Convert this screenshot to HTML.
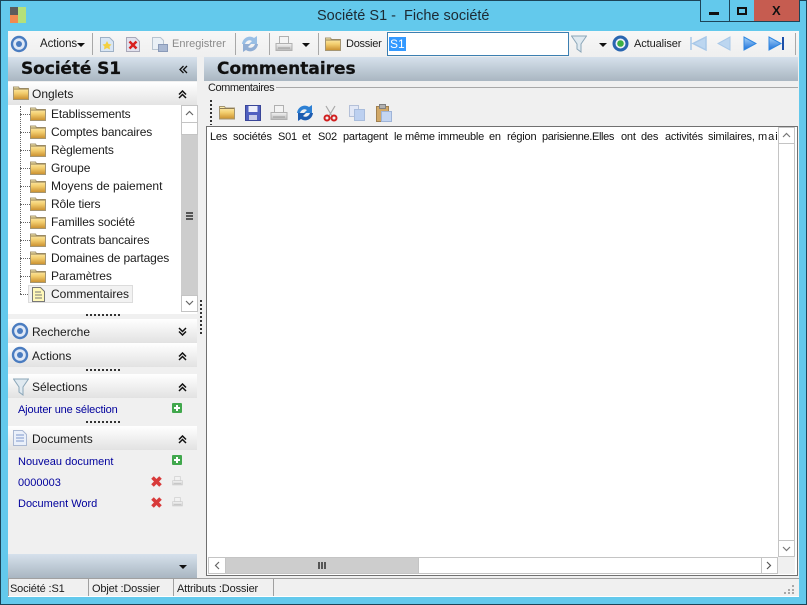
<!DOCTYPE html>
<html><head><meta charset="utf-8">
<style>
html,body{margin:0;padding:0}
body{width:807px;height:605px;overflow:hidden;position:relative;background:#63c9ec;font-family:"Liberation Sans",sans-serif;font-size:12px;color:#1c1c1c}
div,span,svg{position:absolute;box-sizing:border-box}
.t{white-space:nowrap;line-height:14px}
.tr{letter-spacing:-.13px}
.hd{background:linear-gradient(#d6e1ec,#a9b6c1)}
.sec{left:8px;width:189px;height:24px;background:linear-gradient(#ffffff,#e2e2e2)}
.lnk{color:#00009c;white-space:nowrap;line-height:14px;left:18px;font-size:11px}
.dots{left:86px;width:35px;height:2px;background:repeating-linear-gradient(90deg,#333 0 2px,transparent 2px 4px)}
.sep{width:1px;background:#a8a8a8;top:33px;height:22px}
.lbl{font-size:11px}
.h{font-family:'DejaVu Sans',sans-serif;font-weight:bold;font-size:17px;line-height:22px;color:#101010;-webkit-text-stroke:.25px #101010}
.w span{top:0;white-space:nowrap}
.st{font-size:11px;letter-spacing:-.15px}
</style></head><body>
<svg width="0" height="0" style="left:0;top:0">
<defs>
<linearGradient id="fg" x1="0" y1="0" x2="0" y2="1"><stop offset="0" stop-color="#fff3b8"/><stop offset=".5" stop-color="#f2cc6c"/><stop offset="1" stop-color="#c98f2e"/></linearGradient>
<linearGradient id="pg" x1="0" y1="0" x2="0" y2="1"><stop offset="0" stop-color="#f4f4f4"/><stop offset="1" stop-color="#b8b8b8"/></linearGradient>
<linearGradient id="bg" x1="0" y1="0" x2="0" y2="1"><stop offset="0" stop-color="#a8d4fa"/><stop offset="1" stop-color="#1c6fd8"/></linearGradient>
<symbol id="folder" viewBox="0 0 16 14"><path d="M.5 2.500V1h5l1 1.500h9v11H.5z" fill="url(#fg)" stroke="#a49572"/><path d="M1 3h14" stroke="#8e7c54" stroke-width="1"/></symbol>
<symbol id="target" viewBox="0 0 18 18"><circle cx="9" cy="9" r="7" fill="#dfe8f6" stroke="#4a7cc0" stroke-width="2.400"/><circle cx="9" cy="9" r="3" fill="#4a7cc0"/></symbol>
<symbol id="printer" viewBox="0 0 18 16"><rect x="4.500" y=".5" width="9" height="7" fill="#f4f4f4" stroke="#b0b0b0"/><path d="M1 7.500h16v7H1z" fill="url(#pg)" stroke="#b0b0b0"/><path d="M3 12h12" stroke="#999"/></symbol>
<symbol id="funnel" viewBox="0 0 16 18"><path d="M.5 1h15L10 9v8L6 14V9z" fill="#dfe9f0" stroke="#8ba6b8"/></symbol>
<symbol id="refresh" viewBox="0 0 18 18"><path d="M1 9C2 2 9 0 13 3l3-2v8H8l3-3C8 4 5 6 4 9z" fill="#2d80d4"/><path d="M17 9c-1 7-8 9-12 6l-3 2V9h8l-3 3c3 2 6 0 7-3z" fill="#1d5cb0"/></symbol>
<symbol id="dchev" viewBox="0 0 9 9"><path d="M1 4.500 4.500 1 8 4.500M1 8 4.500 4.500 8 8" fill="none" stroke="#111" stroke-width="1.500"/></symbol>
<symbol id="plus" viewBox="0 0 11 11"><rect width="10" height="10" fill="#41a84d" rx="1"/><path d="M5 2v6M2 5h6" stroke="#fff" stroke-width="2"/></symbol>
<symbol id="redx" viewBox="0 0 11 11"><path d="M1.500 1.500l8 8M9.500 1.500l-8 8" stroke="#d83a3a" stroke-width="3.600"/></symbol>
<symbol id="note" viewBox="0 0 13 15"><path d="M.5.5h8l4 4v10H.5z" fill="#fff8b8" stroke="#777"/><path d="M3 5h6M3 8h7M3 11h7" stroke="#777"/></symbol>
<symbol id="docb" viewBox="0 0 14 16"><path d="M.5.5h9l4 4v11H.5z" fill="#eaf0fa" stroke="#aab8d2"/><path d="M3 5h8M3 8h8M3 11h8" stroke="#7f98cc"/></symbol>
</defs></svg>

<!-- window frame -->
<div style="left:0;top:0;width:807px;height:605px;border:1px solid #1c4458"></div>
<div class="t" style="left:317px;top:8px;font-size:14.500px;color:#1d2a33;line-height:16px;white-space:pre">Société S1 -  Fiche société</div>
<!-- app icon -->
<div style="left:10px;top:7px;width:8px;height:8px;background:#5c5c5c"></div>
<div style="left:10px;top:15px;width:8px;height:8px;background:#f08a50"></div>
<div style="left:18px;top:7px;width:8px;height:16px;background:#b4e07a"></div>
<!-- caption buttons -->
<div style="left:700px;top:0;width:100px;height:22px;border:1px solid #1c4458;border-top:0;background:#63c9ec"></div>
<div style="left:729px;top:0;width:1px;height:21px;background:#1c4458"></div>
<div style="left:754px;top:0;width:46px;height:22px;background:#c65c50;border-bottom:1px solid #1c4458;border-right:1px solid #1c4458"></div>
<div style="left:709px;top:12px;width:10px;height:3px;background:#111"></div>
<div style="left:737px;top:7px;width:10px;height:8px;border:2px solid #111"></div>
<div class="t" style="left:772px;top:3px;font-size:13px;font-weight:bold;line-height:16px;color:#111">X</div>

<!-- client -->
<div style="left:8px;top:31px;width:791px;height:566px;background:#f0f0f0"></div>

<!-- toolbar -->
<div style="left:8px;top:31px;width:791px;height:26px;background:linear-gradient(#f7f7f7,#efefef)"></div>
<svg style="left:10px;top:35px" width="18" height="18"><use href="#target"/></svg>
<div class="t lbl" style="left:40px;top:37px;font-size:11.500px;letter-spacing:-.1px">Actions</div>
<div style="left:77px;top:43px;border:4px solid transparent;border-top:4px solid #111;border-bottom:0"></div>
<div class="sep" style="left:92px"></div>
<svg style="left:100px;top:37px" width="14" height="15"><path d="M.5.5h9l4 4v10H.5z" fill="#d9e6f4" stroke="#9fb1c6"/><path d="M7 4l1.500 3 3 .5-2 2 .5 3L7 11l-3 1.500.5-3-2-2 3-.5z" fill="#f4d040"/></svg>
<svg style="left:126px;top:37px" width="14" height="15"><path d="M.5.5h9l4 4v10H.5z" fill="#e2e2ee" stroke="#a8a8b8"/><path d="M3.500 4.500l7 7M10.500 4.500l-7 7" stroke="#d82020" stroke-width="2.500"/></svg>
<svg style="left:152px;top:37px" width="16" height="15"><path d="M.5.5h8l3 3v9H.5z" fill="#eaf0f6" stroke="#b8c4d0"/><rect x="6.500" y="7.500" width="9" height="7" fill="#a9b8d2" stroke="#8a9ab8"/></svg>
<div class="t lbl" style="left:172px;top:37px;color:#8a8a8a">Enregistrer</div>
<div class="sep" style="left:235px"></div>
<svg style="left:241px;top:35px;opacity:.45" width="18" height="18"><use href="#refresh"/></svg>
<div class="sep" style="left:269px"></div>
<svg style="left:275px;top:36px" width="18" height="16"><use href="#printer"/></svg>
<div style="left:302px;top:43px;border:4px solid transparent;border-top:4px solid #111;border-bottom:0"></div>
<div class="sep" style="left:318px"></div>
<svg style="left:325px;top:37px" width="16" height="14"><use href="#folder"/></svg>
<div class="t lbl" style="left:346px;top:37px;letter-spacing:-.25px">Dossier</div>
<div style="left:387px;top:32px;width:182px;height:24px;background:#fff;border:1px solid #3c7fb1"></div>
<div class="t" style="left:389px;top:37px;background:#3399ff;color:#fff;padding:0 1px;font-size:12px">S1</div>
<svg style="left:571px;top:35px" width="16" height="18"><use href="#funnel"/></svg>
<div style="left:599px;top:43px;border:4px solid transparent;border-top:4px solid #111;border-bottom:0"></div>
<svg style="left:612px;top:35px" width="17" height="17"><circle cx="8.500" cy="8.500" r="6.500" fill="#eef2f8" stroke="#2a66b0" stroke-width="3"/><circle cx="8.500" cy="8.500" r="3.300" fill="#3cb043"/></svg>
<div class="t lbl" style="left:634px;top:37px;letter-spacing:-.1px">Actualiser</div>
<svg style="left:690px;top:36px" width="18" height="15"><path d="M1 1v13M16 1v13L3 7.500z" fill="#bcd6f0" stroke="#a8c8e8" stroke-width="1.500"/></svg>
<svg style="left:717px;top:36px" width="14" height="15"><path d="M13 1v13L1 7.500z" fill="#bcd6f0" stroke="#a8c8e8"/></svg>
<svg style="left:743px;top:36px" width="14" height="15"><path d="M1 1v13L13 7.500z" fill="url(#bg)" stroke="#2f86e0"/></svg>
<svg style="left:768px;top:36px" width="18" height="15"><path d="M1 1v13L13 7.500z" fill="url(#bg)" stroke="#2f86e0"/><path d="M15 1v13" stroke="#1c4fa8" stroke-width="2"/></svg>
<div class="sep" style="left:795px"></div>

<!-- left header -->
<div class="hd" style="left:8px;top:57px;width:189px;height:24px"></div>
<div class="t h" style="left:21px;top:58px;letter-spacing:-.1px">Société S1</div>
<svg style="left:179px;top:65px" width="9" height="9"><path d="M4.500 1 1 4.500 4.500 8M8 1 4.500 4.500 8 8" fill="none" stroke="#111" stroke-width="1.300"/></svg>
<!-- right header -->
<div class="hd" style="left:204px;top:57px;width:594px;height:24px"></div>
<div class="t h" style="left:217px;top:58px">Commentaires</div>

<!-- Onglets -->
<div class="sec" style="top:82px"></div>
<svg style="left:13px;top:86px" width="16" height="14"><use href="#folder"/></svg>
<div class="t" style="left:32px;top:87px">Onglets</div>
<svg style="left:178px;top:90px" width="9" height="9"><use href="#dchev"/></svg>

<!-- tree -->
<div style="left:8px;top:105px;width:189px;height:209px;background:#fff"></div>
<div style="left:20px;top:106px;width:0;height:188px;border-left:1px dotted #666"></div>
<div style="left:20px;top:114px;width:10px;height:0;border-top:1px dotted #666"></div>
<div style="left:20px;top:132px;width:10px;height:0;border-top:1px dotted #666"></div>
<div style="left:20px;top:150px;width:10px;height:0;border-top:1px dotted #666"></div>
<div style="left:20px;top:168px;width:10px;height:0;border-top:1px dotted #666"></div>
<div style="left:20px;top:186px;width:10px;height:0;border-top:1px dotted #666"></div>
<div style="left:20px;top:204px;width:10px;height:0;border-top:1px dotted #666"></div>
<div style="left:20px;top:222px;width:10px;height:0;border-top:1px dotted #666"></div>
<div style="left:20px;top:240px;width:10px;height:0;border-top:1px dotted #666"></div>
<div style="left:20px;top:258px;width:10px;height:0;border-top:1px dotted #666"></div>
<div style="left:20px;top:276px;width:10px;height:0;border-top:1px dotted #666"></div>
<div style="left:20px;top:294px;width:10px;height:0;border-top:1px dotted #666"></div>
<svg style="left:30px;top:107px" width="16" height="14"><use href="#folder"/></svg><div class="t tr" style="left:51px;top:107px">Etablissements</div>
<svg style="left:30px;top:125px" width="16" height="14"><use href="#folder"/></svg><div class="t tr" style="left:51px;top:125px">Comptes bancaires</div>
<svg style="left:30px;top:143px" width="16" height="14"><use href="#folder"/></svg><div class="t tr" style="left:51px;top:143px">Règlements</div>
<svg style="left:30px;top:161px" width="16" height="14"><use href="#folder"/></svg><div class="t tr" style="left:51px;top:161px">Groupe</div>
<svg style="left:30px;top:179px" width="16" height="14"><use href="#folder"/></svg><div class="t" style="left:51px;top:179px">Moyens de paiement</div>
<svg style="left:30px;top:197px" width="16" height="14"><use href="#folder"/></svg><div class="t tr" style="left:51px;top:197px">Rôle tiers</div>
<svg style="left:30px;top:215px" width="16" height="14"><use href="#folder"/></svg><div class="t tr" style="left:51px;top:215px">Familles société</div>
<svg style="left:30px;top:233px" width="16" height="14"><use href="#folder"/></svg><div class="t tr" style="left:51px;top:233px">Contrats bancaires</div>
<svg style="left:30px;top:251px" width="16" height="14"><use href="#folder"/></svg><div class="t tr" style="left:51px;top:251px">Domaines de partages</div>
<svg style="left:30px;top:269px" width="16" height="14"><use href="#folder"/></svg><div class="t tr" style="left:51px;top:269px">Paramètres</div>
<div style="left:28px;top:285px;width:105px;height:18px;background:#f2f2f2;border:1px solid #dcdcdc"></div>
<svg style="left:32px;top:287px" width="13" height="15"><use href="#note"/></svg><div class="t" style="left:51px;top:287px">Commentaires</div>
<!-- tree scrollbar -->
<div style="left:181px;top:105px;width:17px;height:207px;background:#cdcdcd"></div>
<div style="left:181px;top:105px;width:17px;height:18px;background:#fff;border:1px solid #c4c4c4"></div>
<div style="left:181px;top:123px;width:17px;height:12px;background:#fff;border:1px solid #c4c4c4;border-top:0"></div>
<div style="left:181px;top:295px;width:17px;height:17px;background:#fff;border:1px solid #c4c4c4"></div>
<svg style="left:185px;top:110px" width="9" height="6"><path d="M1 5 4.500 1.500 8 5" fill="none" stroke="#666" stroke-width="1.200"/></svg>
<svg style="left:185px;top:300px" width="9" height="6"><path d="M1 1 4.500 4.500 8 1" fill="none" stroke="#666" stroke-width="1.200"/></svg>
<div style="left:186px;top:212px;width:7px;height:8px;background:repeating-linear-gradient(#555 0 2px,transparent 2px 3px)"></div>
<div class="dots" style="top:314px"></div>
<div style="left:200px;top:300px;width:2px;height:36px;background:repeating-linear-gradient(#333 0 2px,transparent 2px 4px)"></div>

<!-- sections -->
<div class="sec" style="top:319px"></div>
<svg style="left:11px;top:322px" width="18" height="18"><use href="#target"/></svg>
<div class="t" style="left:32px;top:325px">Recherche</div>
<svg style="left:178px;top:327px" width="9" height="9"><path d="M1 1l3.500 3.500L8 1M1 4.500 4.500 8 8 4.500" fill="none" stroke="#111" stroke-width="1.500"/></svg>
<div class="sec" style="top:343px"></div>
<svg style="left:11px;top:346px" width="18" height="18"><use href="#target"/></svg>
<div class="t" style="left:32px;top:349px">Actions</div>
<svg style="left:178px;top:352px" width="9" height="9"><use href="#dchev"/></svg>
<div class="dots" style="top:369px"></div>
<div class="sec" style="top:374px"></div>
<svg style="left:13px;top:378px" width="16" height="18"><use href="#funnel"/></svg>
<div class="t" style="left:32px;top:380px">Sélections</div>
<svg style="left:178px;top:383px" width="9" height="9"><use href="#dchev"/></svg>
<div class="lnk" style="top:403px;letter-spacing:-.15px">Ajouter une sélection</div>
<svg style="left:172px;top:403px" width="11" height="11"><use href="#plus"/></svg>
<div class="dots" style="top:421px"></div>
<div class="sec" style="top:426px"></div>
<svg style="left:13px;top:430px" width="14" height="16"><use href="#docb"/></svg>
<div class="t" style="left:32px;top:432px">Documents</div>
<svg style="left:178px;top:435px" width="9" height="9"><use href="#dchev"/></svg>
<div class="lnk" style="top:455px">Nouveau document</div>
<svg style="left:172px;top:455px" width="11" height="11"><use href="#plus"/></svg>
<div class="lnk" style="top:476px">0000003</div>
<svg style="left:151px;top:476px" width="11" height="11"><use href="#redx"/></svg>
<svg style="left:172px;top:476px;opacity:.6" width="11" height="10"><use href="#printer"/></svg>
<div class="lnk" style="top:497px">Document Word</div>
<svg style="left:151px;top:497px" width="11" height="11"><use href="#redx"/></svg>
<svg style="left:172px;top:497px;opacity:.6" width="11" height="10"><use href="#printer"/></svg>
<div class="hd" style="left:8px;top:554px;width:189px;height:24px"></div>
<div style="left:179px;top:565px;border:4px solid transparent;border-top:4px solid #111;border-bottom:0"></div>

<!-- right content -->
<div class="t" style="left:208px;top:81px;font-size:11px;letter-spacing:-.45px">Commentaires</div>
<div style="left:276px;top:87px;width:522px;height:1px;background:#a8a8a8"></div>
<div style="left:210px;top:100px;height:25px;background:repeating-linear-gradient(#333 0 2px,transparent 2px 4px);width:2px"></div>
<svg style="left:219px;top:105px" width="16" height="15"><use href="#folder"/></svg>
<svg style="left:245px;top:105px" width="16" height="16"><rect x=".5" y=".5" width="15" height="15" fill="#5060c0" stroke="#3a4698"/><rect x="3.500" y="1" width="9" height="6" fill="#eef0fa"/><rect x="4" y="10" width="8" height="5" fill="#c8cce8"/></svg>
<svg style="left:270px;top:105px" width="18" height="16"><use href="#printer"/></svg>
<svg style="left:296px;top:104px" width="18" height="18"><use href="#refresh"/></svg>
<svg style="left:323px;top:105px" width="15" height="17"><path d="M3 1l6 10M12 1 6 11" stroke="#a8a8a8" stroke-width="1.200" fill="none"/><circle cx="4" cy="13" r="2.500" fill="none" stroke="#d02020" stroke-width="2"/><circle cx="11" cy="13" r="2.500" fill="none" stroke="#d02020" stroke-width="2"/></svg>
<svg style="left:349px;top:105px" width="16" height="16"><rect x=".5" y=".5" width="9" height="11" fill="#e2e8f6" stroke="#b4c0d8"/><rect x="5.500" y="4.500" width="10" height="11" fill="#bcd0f0" stroke="#a8bcdc"/></svg>
<svg style="left:376px;top:104px" width="16" height="18"><rect x=".5" y="2.500" width="12" height="15" fill="#d2a968" stroke="#a08050"/><rect x="3.500" y=".5" width="6" height="4" fill="#b0b0b0" stroke="#808080"/><rect x="5.500" y="7.500" width="10" height="10" fill="#c4d6f2" stroke="#9fb4d8"/></svg>

<!-- text box -->
<div style="left:206px;top:126px;width:592px;height:450px;background:#fff;border:1px solid #707070"></div>
<div class="w" style="left:210px;top:130px;width:568px;height:16px;overflow:hidden;font-size:11px;line-height:14px;color:#111;letter-spacing:-.2px">
<span style="left:0">Les</span><span style="left:23px">sociétés</span><span style="left:68px">S01</span><span style="left:92px">et</span><span style="left:108px">S02</span><span style="left:133px">partagent</span><span style="left:184px">le</span><span style="left:195px">même</span><span style="left:228px">immeuble</span><span style="left:279px">en</span><span style="left:297px">région</span><span style="left:332px;letter-spacing:-.35px">parisienne.Elles</span><span style="left:411px">ont</span><span style="left:431px">des</span><span style="left:455px">activités</span><span style="left:498px">similaires,</span><span style="left:548px;letter-spacing:1px">mais</span>
</div>
<!-- v scroll -->
<div style="left:778px;top:127px;width:17px;height:430px;background:#fff;border-left:1px solid #c4c4c4;border-right:1px solid #c4c4c4"></div>
<div style="left:778px;top:127px;width:17px;height:17px;background:#fff;border:1px solid #c4c4c4"></div>
<div style="left:778px;top:540px;width:17px;height:17px;background:#fff;border:1px solid #c4c4c4"></div>
<svg style="left:782px;top:132px" width="9" height="6"><path d="M1 5 4.500 1.500 8 5" fill="none" stroke="#777" stroke-width="1.200"/></svg>
<svg style="left:782px;top:546px" width="9" height="6"><path d="M1 1 4.500 4.500 8 1" fill="none" stroke="#777" stroke-width="1.200"/></svg>
<!-- h scroll -->
<div style="left:208px;top:557px;width:570px;height:17px;background:#fff;border-top:1px solid #c4c4c4;border-bottom:1px solid #c4c4c4"></div>
<div style="left:208px;top:557px;width:18px;height:17px;background:#fff;border:1px solid #c4c4c4"></div>
<div style="left:225px;top:557px;width:194px;height:17px;background:#cdcdcd;border:1px solid #c4c4c4"></div>
<div style="left:761px;top:557px;width:17px;height:17px;background:#fff;border:1px solid #c4c4c4"></div>
<svg style="left:214px;top:561px" width="6" height="9"><path d="M5 1 1.500 4.500 5 8" fill="none" stroke="#666" stroke-width="1.200"/></svg>
<svg style="left:766px;top:561px" width="6" height="9"><path d="M1 1 4.500 4.500 1 8" fill="none" stroke="#555" stroke-width="1.200"/></svg>
<div style="left:318px;top:562px;width:8px;height:7px;background:repeating-linear-gradient(90deg,#555 0 2px,transparent 2px 3px)"></div>
<div style="left:778px;top:557px;width:17px;height:17px;background:#f0f0f0"></div>

<!-- status bar -->
<div style="left:8px;top:578px;width:791px;height:19px;background:#f0f0f0;border-top:1px solid #a0a0a0;border-bottom:1px solid #fff"></div>
<div style="left:8px;top:578px;width:1px;height:18px;background:#a0a0a0"></div>
<div style="left:88px;top:578px;width:1px;height:18px;background:#a0a0a0"></div>
<div style="left:173px;top:578px;width:1px;height:18px;background:#a0a0a0"></div>
<div style="left:273px;top:578px;width:1px;height:18px;background:#a0a0a0"></div>
<div class="t st" style="left:10px;top:582px">Société :S1</div>
<div class="t st" style="left:92px;top:582px">Objet :Dossier</div>
<div class="t st" style="left:177px;top:582px">Attributs :Dossier</div>
<svg style="left:784px;top:583px" width="12" height="12"><path d="M8 2h2v2H8zM4 6h2v2H4zM8 6h2v2H8zM0 9h2v2H0zM4 9h2v2H4zM8 9h2v2H8z" fill="#a8a8a8"/></svg>
</body></html>
